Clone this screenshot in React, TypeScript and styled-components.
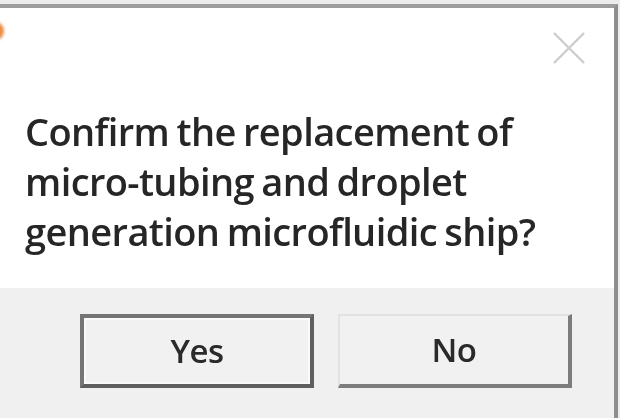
import * as React from 'react'
import styled, { createGlobalStyle } from 'styled-components'

const GlobalStyle = createGlobalStyle`
  html, body {
    margin: 0;
    padding: 0;
    background: #ececec;
    overflow: hidden;
  }
  body {
    font-family: 'Open Sans', 'Noto Sans', sans-serif;
  }
`

const Screen = styled.div`
  width: 620px;
  height: 418px;
  padding-top: 4px;
  box-sizing: border-box;
  filter: blur(0.7px);
`

const Window = styled.div`
  width: 618px;
  height: 414px;
  box-sizing: border-box;
  border-top: 4px solid #9d9d9d;
  border-right: 4px solid #8e8e8e;
  background: #ffffff;
  display: flex;
  flex-direction: column;
`

const Body = styled.div`
  height: 280px;
  display: flex;
  flex-direction: column;
  background: #ffffff;
`

const TitleBar = styled.div`
  height: 98px;
  display: flex;
  align-items: flex-start;
  justify-content: space-between;
`

const AppIcon = styled.div`
  width: 16px;
  height: 18px;
  margin: 14px 0 0 -12px;
  border-radius: 50%;
  background: #f28a3a;
  filter: blur(1.5px);
`

const CloseButton = styled.button`
  width: 34px;
  height: 34px;
  margin: 23px 28px 0 0;
  padding: 0;
  border: none;
  background: transparent;
  display: flex;
  align-items: center;
  justify-content: center;
`

const Message = styled.p`
  margin: 0;
  padding-left: 25px;
  font-size: 38px;
  font-weight: 580;
  line-height: 50px;
  color: #262626;
  letter-spacing: -0.6px;
  word-spacing: -2px;
`

const Footer = styled.div`
  flex: 1;
  background: #f0f0f0;
  display: flex;
  justify-content: flex-end;
  align-items: flex-start;
  gap: 24px;
  padding: 26px 42px 0 0;
`

const DialogButton = styled.button<{ $default?: boolean }>`
  width: 234px;
  height: 74px;
  box-sizing: border-box;
  background: #f1f1f1;
  font-family: 'Open Sans', 'Noto Sans', sans-serif;
  font-size: 33px;
  font-weight: 580;
  letter-spacing: -0.6px;
  color: #2a2a2a;
  padding: 0 0 2px 0;
  border-style: solid;
  border-width: ${p => (p.$default ? '4px' : '2px 4px 4px 2px')};
  border-color: ${p =>
    p.$default ? '#757575 #5f5f5f #5f5f5f #757575' : '#e2e2e2 #7c7c7c #7c7c7c #e2e2e2'};
  box-shadow: ${p => (p.$default ? 'inset 0 0 0 2px #fafafa' : 'none')};
`

const CloseIcon = () => (
  <svg width="34" height="34" viewBox="0 0 34 34">
    <path d="M2 2 L32 32 M32 2 L2 32" stroke="#cdcdcd" strokeWidth="2.4" fill="none" />
  </svg>
)

const App: React.FC = () => {
  return (
    <Screen>
      <GlobalStyle />
      <Window>
        <Body>
          <TitleBar>
            <AppIcon />
            <CloseButton aria-label="Close">
              <CloseIcon />
            </CloseButton>
          </TitleBar>
          <Message>
            Confirm the replacement of
            <br />
            micro-tubing and droplet
            <br />
            generation microfluidic ship?
          </Message>
        </Body>
        <Footer>
          <DialogButton $default>Yes</DialogButton>
          <DialogButton>No</DialogButton>
        </Footer>
      </Window>
    </Screen>
  )
}

export default App
